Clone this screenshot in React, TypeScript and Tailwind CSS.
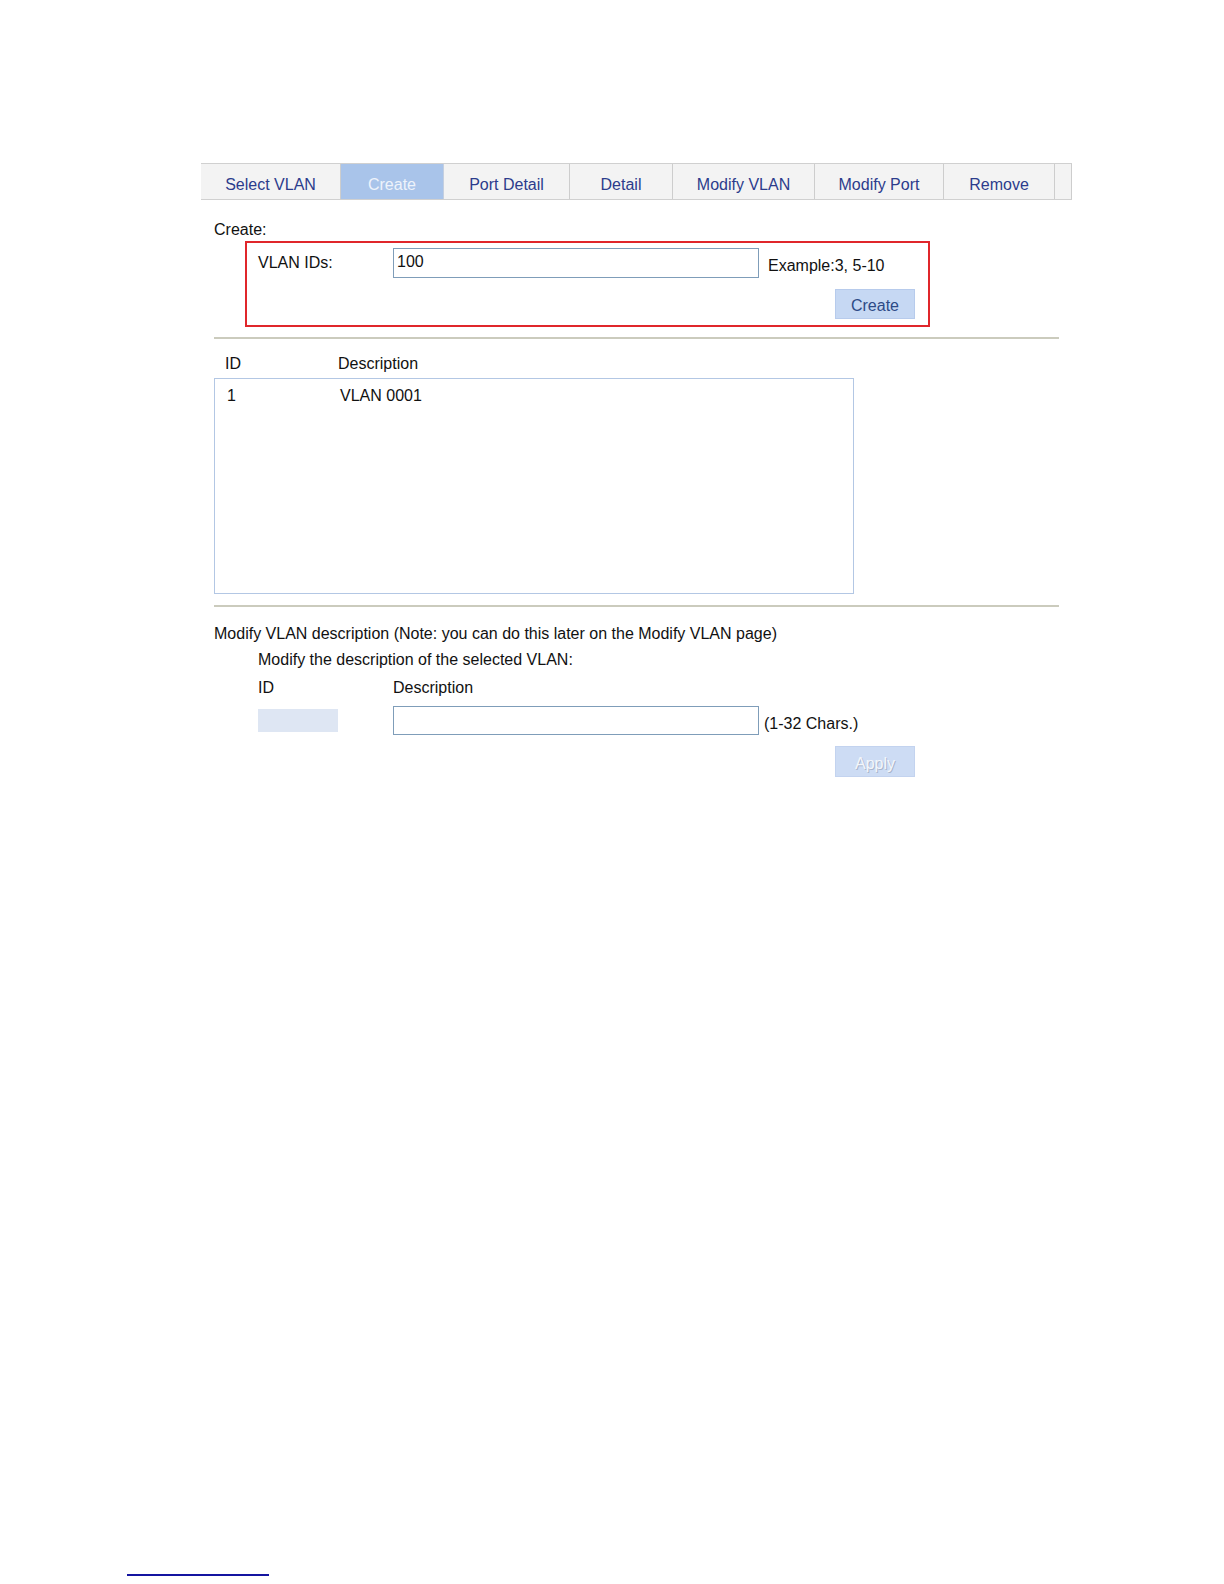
const TABS = [
  { label: 'Select VLAN', w: 140 },
  { label: 'Create', w: 103, active: true },
  { label: 'Port Detail', w: 126 },
  { label: 'Detail', w: 103 },
  { label: 'Modify VLAN', w: 142 },
  { label: 'Modify Port', w: 129 },
  { label: 'Remove', w: 111 },
];

function TabBar() {
  return (
    <div className="flex h-[37px] w-[871px] border-y border-[#d0d0d0] bg-[#f3f3f3]">
      {TABS.map((t) => (
        <div
          key={t.label}
          style={{ width: t.w }}
          className={
            t.active
              ? 'flex items-center justify-center border-r border-[#c4cfe0] bg-[#a9c4ea] text-[16px] text-[#eef3fb]'
              : 'flex items-center justify-center border-r border-[#cdcdcd] text-[16px] text-[#2c3c8c]'
          }
        >
          <span className="pt-[6px]">{t.label}</span>
        </div>
      ))}
      <div className="flex-1 border-r border-[#cdcdcd]" />
    </div>
  );
}

function Divider() {
  return <div className="h-[2px] w-[845px] bg-[#cbcbbd]" />;
}

export default function App() {
  return (
    <div
      className="flex h-[1584px] w-full flex-col bg-white text-[16px] leading-[18px] text-[#111]"
      style={{ fontFamily: '"Liberation Sans", Arial, sans-serif' }}
    >
      <div className="pl-[201px] pt-[163px]">
        <TabBar />

        <div className="pl-[13px]">
          <div className="mt-[21px]">Create:</div>

          {/* highlighted create form */}
          <div className="ml-[31px] mt-[2px] h-[86px] w-[685px] border-2 border-[#e0262b] pl-[11px] pr-[13px] pt-[5px]">
            <div className="flex items-center">
              <div className="w-[135px]">VLAN IDs:</div>
              <div className="flex h-[30px] w-[366px] items-center border border-[#7f9db9] pl-[3px] pb-[2px]">100</div>
              <div className="ml-[9px] pt-[6px]">Example:3, 5-10</div>
            </div>
            <div className="mt-[11px] flex justify-end">
              <button
                type="button"
                className="h-[30px] w-[80px] border border-[#b7cbec] bg-[#c6d8f3] pt-[4px] text-[16px] text-[#2d4a86]"
              >
                Create
              </button>
            </div>
          </div>

          <div className="mt-[10px]">
            <Divider />
          </div>

          <div className="mt-[16px] flex">
            <div className="w-[124px] pl-[11px]">ID</div>
            <div>Description</div>
          </div>

          <div className="mt-[5px] h-[216px] w-[640px] border border-[#b3c7e4] pt-[8px]">
            <div className="flex">
              <div className="w-[125px] pl-[12px]">1</div>
              <div>VLAN 0001</div>
            </div>
          </div>

          <div className="mt-[11px]">
            <Divider />
          </div>

          <div className="mt-[18px]">
            Modify VLAN description (Note: you can do this later on the Modify VLAN page)
          </div>

          <div className="pl-[44px]">
            <div className="mt-[8px]">Modify the description of the selected VLAN:</div>

            <div className="mt-[10px] flex">
              <div className="w-[135px]">ID</div>
              <div>Description</div>
            </div>

            <div className="mt-[9px] flex items-start">
              <div className="mt-[3px] h-[23px] w-[80px] bg-[#dee6f3]" />
              <div className="ml-[55px] h-[29px] w-[366px] border border-[#7f9db9]" />
              <div className="ml-[5px] mt-[9px]">(1-32 Chars.)</div>
            </div>
          </div>

          <div className="ml-[621px] mt-[11px]">
            <button
              type="button"
              disabled
              className="h-[31px] w-[80px] border border-[#c3d3ef] bg-[#cddcf4] pt-[4px] text-[16px] text-[#f3f6fb] [text-shadow:1px_1px_0_#a9b6cc]"
            >
              Apply
            </button>
          </div>
        </div>
      </div>

      <div className="mt-auto pb-[8px] pl-[127px]">
        <div className="h-[2px] w-[142px] bg-[#1414a0]" />
      </div>
    </div>
  );
}
